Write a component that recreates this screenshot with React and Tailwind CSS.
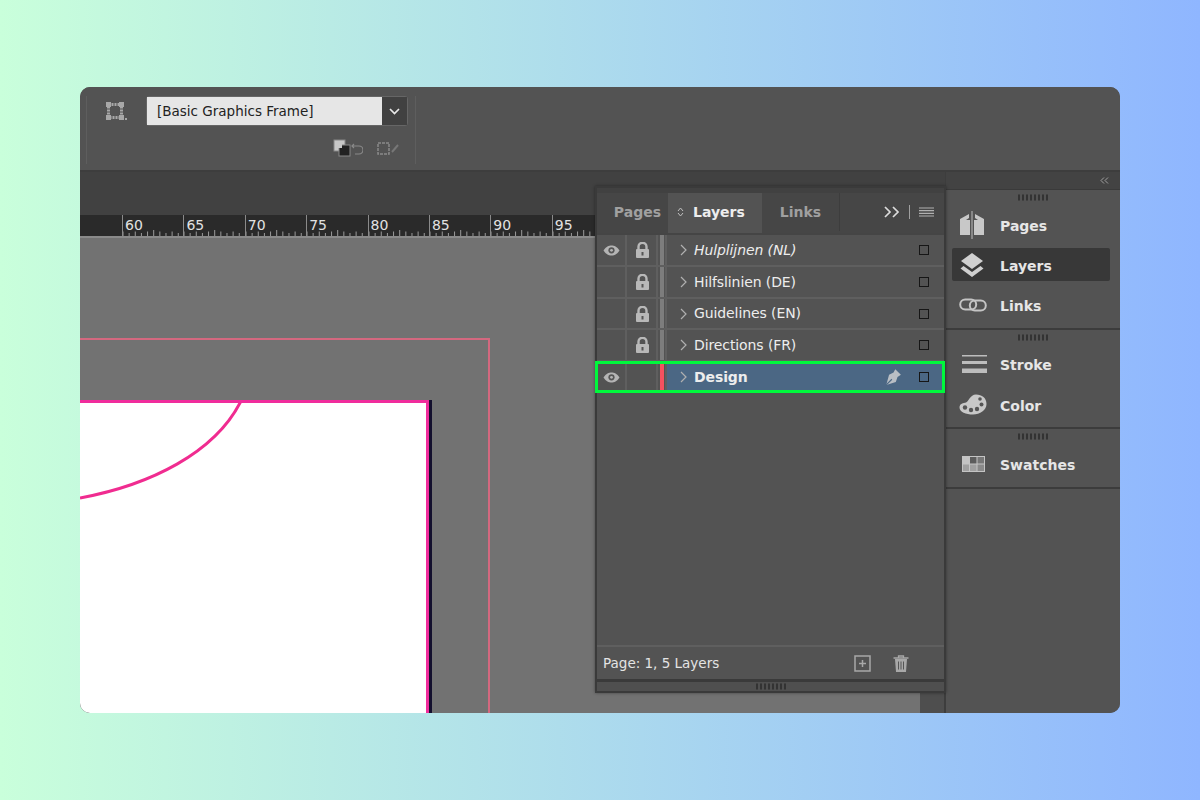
const font = { fontFamily: '"DejaVu Sans", sans-serif' };

const layers = [
  { label: 'Hulplijnen (NL)', eye: true, lock: true, italic: true, height: 'h-[32px]' },
  { label: 'Hilfslinien (DE)', lock: true, height: 'h-[32px]' },
  { label: 'Guidelines (EN)', lock: true, height: 'h-[31px]' },
  { label: 'Directions (FR)', lock: true, height: 'h-[32px]' },
  { label: 'Design', eye: true, active: true, height: 'h-[30px]' },
];

const rulerLabels = [60, 65, 70, 75, 80, 85, 90, 95];

function Eye() {
  return (
    <svg width="17" height="11" viewBox="0 0 17 11">
      <path d="M0.5 5.5C3 1.5 5.8 0.5 8.5 0.5s5.5 1 8 5c-2.5 4-5.3 5-8 5s-5.5-1-8-5z" fill="#b4b4b4" />
      <circle cx="8.5" cy="5.3" r="3.1" fill="#555" />
      <circle cx="8.5" cy="5.3" r="1.4" fill="#b4b4b4" />
    </svg>
  );
}

function Lock() {
  return (
    <svg width="15" height="16" viewBox="0 0 15 16">
      <path d="M3.5 7V4.8a4 4 0 0 1 8 0V7" fill="none" stroke="#b8b8b8" strokeWidth="2.4" />
      <rect x="1" y="7" width="13" height="9" rx="1" fill="#b8b8b8" />
      <rect x="6.5" y="10" width="2" height="3.5" fill="#555" />
    </svg>
  );
}

function Chevron({ color = '#b0b0b0' }) {
  return (
    <svg width="7" height="12" viewBox="0 0 7 12">
      <path d="M1 1l5 5-5 5" fill="none" stroke={color} strokeWidth="1.2" />
    </svg>
  );
}

function Grip() {
  return (
    <svg width="30" height="7" viewBox="0 0 30 7" className="block">
      {[1, 5, 9, 13, 17, 21, 25, 29].map((x) => (
        <line key={x} x1={x} x2={x} y1="0.5" y2="6.5" stroke="#333" strokeWidth="2" />
      ))}
    </svg>
  );
}

function RulerTicks() {
  const ticks = [];
  for (let i = 0; i < 10; i++) {
    ticks.push(
      <line key={i} x1={i * 6.14} x2={i * 6.14} y1={i === 5 ? 0 : i % 2 ? 3 : 1.5} y2="6" stroke="#9a9a9a" strokeWidth="1" />
    );
  }
  return (
    <svg width="61" height="6" viewBox="0 0 61 6" className="absolute bottom-0 left-0">
      {ticks}
    </svg>
  );
}

function LayerRow({ layer }) {
  return (
    <div className={`relative flex items-stretch ${layer.height} ${layer.active ? '' : 'border-b-2 border-[#5f5f5f]'}`}>
      <div className="flex w-[30px] items-center justify-center border-r-2 border-[#5f5f5f]">
        {layer.eye && <Eye />}
      </div>
      <div className="flex w-[31px] items-center justify-center border-r-2 border-[#5f5f5f] pl-[2px]">
        {layer.lock && <Lock />}
      </div>
      <div className="flex w-[9px] justify-center border-r-2 border-[#5f5f5f]">
        <div className={`w-[4px] ${layer.active ? 'bg-[#f5515f]' : 'bg-[#7d7d7d]'}`} />
      </div>
      <div className={`flex flex-1 items-center pl-[13px] pr-[15px] ${layer.active ? 'bg-[#4b6784]' : ''}`}>
        <Chevron />
        <span className={`ml-[7px] text-[14px] tracking-[-0.1px] text-[#ededed] ${layer.italic ? 'italic' : ''} ${layer.active ? 'font-bold' : ''}`}>
          {layer.label}
        </span>
        {layer.active && (
          <svg width="18" height="18" viewBox="0 0 16 16" className="ml-auto mr-[17px]">
            <path d="M10 1l5 5-3 2-1.5 4.500L2 15 4.500 6 8.500 4z" fill="#b9bec4" />
            <path d="M2 15l5-5" stroke="#4b6784" strokeWidth="1" />
          </svg>
        )}
        <div className={`h-[10px] w-[10px] border-[1.5px] border-[#161616] ${layer.active ? 'ml-0' : 'ml-auto'}`} />
      </div>
      {layer.active && (
        <div className="pointer-events-none absolute -left-[2px] -right-[1px] top-[-1px] bottom-[-1px] border-[3px] border-[#00f83c]" />
      )}
    </div>
  );
}

function LayersPanel() {
  return (
    <div className="absolute left-[515px] top-[14px] flex h-[507px] w-[351px] flex-col border-[2px] border-[#3a3a3a] bg-[#535353] shadow-[0_0_3px_rgba(0,0,0,0.4)]">
      <div className="h-[5px] bg-[#414141]" />
      <div className="flex h-[42px] items-stretch border-b-2 border-[#454545] bg-[#464646] pb-[2px] text-[14px] font-bold">
        <div className="flex w-[71px] items-center justify-end pr-[7px] text-[#a0a0a0]">Pages</div>
        <div className="-mb-[2px] flex w-[94px] items-center gap-[9px] bg-[#535353] pb-[2px] pl-[9px] text-[#ededed]">
          <svg width="7" height="10" viewBox="0 0 7 10">
            <path d="M1 4l2.500-3L6 4M1 6l2.500 3L6 6" fill="none" stroke="#c0c0c0" strokeWidth="1" />
          </svg>
          Layers
        </div>
        <div className="flex w-[78px] items-center justify-center border-r border-[#3d3d3d] text-[#a0a0a0]">Links</div>
        <div className="flex flex-1 items-center justify-end gap-[9px] pr-[10px]">
          <svg width="16" height="12" viewBox="0 0 16 12">
            <path d="M1 1l5 5-5 5M9 1l5 5-5 5" fill="none" stroke="#dcdcdc" strokeWidth="1.700" />
          </svg>
          <div className="h-[14px] w-px bg-[#a0a0a0]" />
          <svg width="15" height="10" viewBox="0 0 15 10">
            <path d="M0 1h15M0 3.700h15M0 6.300h15M0 9h15" stroke="#b0b0b0" strokeWidth="1.200" />
          </svg>
        </div>
      </div>
      <div className="flex flex-1 flex-col border-b-2 border-[#5f5f5f]">
        {layers.map((layer) => (
          <LayerRow key={layer.label} layer={layer} />
        ))}
      </div>
      <div className="flex h-[35px] items-center border-b-[3px] border-[#3a3a3a] pl-[6px] text-[13.500px] text-[#e4e4e4]">
        <span>Page: 1, 5 Layers</span>
        <svg width="17" height="17" viewBox="0 0 17 17" className="ml-[135px]">
          <rect x="1" y="1" width="15" height="15" fill="none" stroke="#a8a8a8" strokeWidth="1.500" />
          <path d="M8.500 5v7M5 8.500h7" stroke="#a8a8a8" strokeWidth="1.500" />
        </svg>
        <svg width="16" height="17" viewBox="0 0 16 17" className="ml-[22px]">
          <path d="M0.500 3h15M5.500 3V1h5v2" fill="none" stroke="#a8a8a8" strokeWidth="1.300" />
          <path d="M2 4h12l-1 13H3z" fill="#a8a8a8" />
          <path d="M5.500 6.500v8M8 6.500v8M10.500 6.500v8" stroke="#555" strokeWidth="1" />
        </svg>
      </div>
      <div className="flex h-[9px] items-center justify-center bg-[#4f4f4f]">
        <Grip />
      </div>
    </div>
  );
}

function DockRow({ icon, label, active }) {
  return (
    <div className={`ml-[6px] mr-[10px] flex h-[33px] items-center rounded-[2px] pl-[7px] ${active ? 'bg-[#383838]' : ''}`}>
      <div className="flex w-[41px] items-center">{icon}</div>
      <span className="mt-[3px] text-[14px] font-bold text-[#e6e6e6]">{label}</span>
    </div>
  );
}

function DockGroup({ children, className }) {
  return (
    <div className={`flex flex-col border-b-2 border-[#3c3c3c] pt-[4px] ${className}`}>
      <div className="flex justify-center">
        <Grip />
      </div>
      {children}
    </div>
  );
}

const icons = {
  pages: (
    <svg width="26" height="28" viewBox="0 0 26 28">
      <path d="M1 8l9-5v4l-3 2h4v15H1zM25 8l-9-5v4l3 2h-4v15h10z" fill="#c8c8c8" />
      <path d="M13 0v28" stroke="#9a9a9a" strokeWidth="1.500" />
    </svg>
  ),
  layers: (
    <svg width="26" height="26" viewBox="0 0 26 26">
      <path d="M13 1l11 8-11 8-11-8z" fill="#d0d0d0" />
      <path d="M4.500 14L1.500 16.500 13 25l11.500-8.500-3-2.500L13 20z" fill="#d0d0d0" />
    </svg>
  ),
  links: (
    <svg width="28" height="14" viewBox="0 0 28 14">
      <rect x="1.200" y="1.500" width="16" height="10" rx="5" fill="none" stroke="#c4c4c4" strokeWidth="2" />
      <rect x="10.800" y="2.500" width="16" height="10" rx="5" fill="none" stroke="#c4c4c4" strokeWidth="2" />
    </svg>
  ),
  stroke: (
    <svg width="25" height="18" viewBox="0 0 25 18" className="ml-[3px]">
      <rect y="0" width="25" height="1.500" fill="#bdbdbd" />
      <rect y="6" width="25" height="3" fill="#bdbdbd" />
      <rect y="13.500" width="25" height="4.500" fill="#bdbdbd" />
    </svg>
  ),
  color: (
    <svg width="28" height="21" viewBox="0 0 28 21">
      <path d="M17 0.500c6 0 10.500 3.500 10.500 9.500S21 20.500 14 20.500 0.500 18 0.500 13.500c0-4 4-4.500 6.500-5S11 0.500 17 0.500z" fill="#c8c8c8" />
      <circle cx="6" cy="13.500" r="2.200" fill="#555" />
      <circle cx="12" cy="16" r="2.200" fill="#555" />
      <circle cx="18" cy="15" r="2.200" fill="#555" />
      <circle cx="22.500" cy="10.500" r="2" fill="#555" />
      <circle cx="21" cy="5" r="1.800" fill="#555" />
    </svg>
  ),
  swatches: (
    <svg width="23" height="16" viewBox="0 0 23 16" className="ml-[3px]">
      <rect width="23" height="16" fill="#c4c4c4" />
      <rect x="8" y="1" width="6.500" height="6.500" fill="#5c5c5c" />
      <rect x="15.500" y="1" width="6.500" height="6.500" fill="#777" />
      <rect x="1" y="8.500" width="6" height="6.500" fill="#a0a0a0" />
      <rect x="8" y="8.500" width="6.500" height="6.500" fill="#a0a0a0" />
      <rect x="15.500" y="8.500" width="6.500" height="6.500" fill="#8a8a8a" />
    </svg>
  ),
};

export default function App() {
  return (
    <div
      className="flex h-[800px] w-[1200px] items-center justify-center bg-[linear-gradient(90deg,#c9ffdb_0%,#8fb6ff_100%)]"
      style={font}
    >
      <div className="flex h-[626px] w-[1040px] flex-col overflow-hidden rounded-[10px] bg-[#535353]">
        {/* control bar */}
        <div className="flex h-[85px] shrink-0 border-b-2 border-[#3d3d3d] bg-[#535353] pl-[6px] pt-[9px]">
          <div className="flex h-[68px] w-[330px] border-x border-[#5e5e5e]">
            <div className="flex w-[59px] justify-center pt-[6px]">
              <svg width="21" height="18" viewBox="0 0 21 18">
                <rect x="2.500" y="2.500" width="13" height="13" fill="none" stroke="#a8a8a8" strokeWidth="3" strokeDasharray="2 1" />
                <rect x="0" y="0" width="5" height="5" fill="#a8a8a8" />
                <rect x="13" y="0" width="5" height="5" fill="#a8a8a8" />
                <rect x="0" y="13" width="5" height="5" fill="#a8a8a8" />
                <rect x="13" y="13" width="5" height="5" fill="#a8a8a8" />
                <rect x="19" y="16" width="2" height="2" fill="#a8a8a8" />
              </svg>
            </div>
            <div className="flex flex-col">
              <div className="flex h-[30px] w-[262px] items-stretch rounded-[3px] border border-[#666]">
                <div className="flex w-[235px] items-center bg-[#e6e6e6] pl-[10px] text-[13.500px] text-[#222]">
                  [Basic Graphics Frame]
                </div>
                <div className="flex flex-1 items-center justify-center bg-[#414141]">
                  <svg width="11" height="7" viewBox="0 0 11 7">
                    <path d="M1 1l4.500 4.500L10 1" fill="none" stroke="#e8e8e8" strokeWidth="1.700" />
                  </svg>
                </div>
              </div>
              <div className="mt-[13px] flex items-center justify-end gap-[14px] pr-[7px]">
                <svg width="30" height="18" viewBox="0 0 30 18">
                  <rect x="1" y="1" width="11" height="11" fill="#c8c8c8" stroke="#888" />
                  <rect x="6" y="6" width="11" height="11" fill="#222" stroke="#888" />
                  <rect x="3" y="3" width="6" height="6" fill="#c8c8c8" />
                  <path d="M19 7h7a3 3 0 0 1 0 8h-4M21 5l-2 2 2 2" fill="none" stroke="#8a8a8a" strokeWidth="1.200" />
                </svg>
                <svg width="24" height="15" viewBox="0 0 24 15">
                  <rect x="1" y="2" width="11" height="11" fill="none" stroke="#8a8a8a" strokeWidth="1.500" strokeDasharray="3 1" />
                  <path d="M15 11l6-7" stroke="#777" strokeWidth="2" />
                </svg>
              </div>
            </div>
          </div>
        </div>

        <div className="relative flex min-h-0 flex-1">
          {/* document area */}
          <div className="relative flex w-[865px] flex-col">
            <div className="h-[43px] shrink-0 bg-[#414141]" />
            <div className="flex h-[23px] shrink-0 overflow-hidden border-b-2 border-[#8a8a8a] bg-[#2a2a2a] pl-[42px]">
              {rulerLabels.map((n) => (
                <div key={n} className="relative w-[61.400px] shrink-0 border-l border-[#8a8a8a] pl-[2px] text-[14px] leading-[20px] text-[#e2e2e2]">
                  {n}
                  <RulerTicks />
                </div>
              ))}
            </div>
            <div className="flex min-h-0 flex-1">
              <div className="relative flex-1 overflow-hidden bg-[#727272]">
                <div className="absolute left-[-2px] top-[100px] h-[400px] w-[412px] border-r-2 border-t-2 border-[#d4687f]" />
                <div className="absolute left-0 top-[162px] h-[320px] w-[352px] border-r-[3px] border-[#14102e]">
                  <div className="relative h-full w-full overflow-hidden border-r-[3px] border-t-[3px] border-[#f02c9c] bg-white">
                    <svg width="170" height="100" viewBox="0 0 170 100" className="absolute left-0 top-0">
                      <path d="M161 -2C135 50 70 82 0 95" fill="none" stroke="#f02c90" strokeWidth="3" />
                    </svg>
                  </div>
                </div>
              </div>
              <div className="w-[25px] shrink-0 border-r border-[#3d3d3d] bg-[#4e4e4e]" />
            </div>
            <LayersPanel />
          </div>

          {/* right dock */}
          <div className="flex flex-1 flex-col border-l border-[#3d3d3d] bg-[#535353]">
            <div className="flex h-[18px] shrink-0 items-center justify-end border-b border-[#3a3a3a] bg-[#434343] pr-[11px]">
              <svg width="9" height="7" viewBox="0 0 9 7">
                <path d="M4 0.500l-3 3 3 3M8 0.500l-3 3 3 3" fill="none" stroke="#a0a0a0" strokeWidth="1" />
              </svg>
            </div>
            <DockGroup className="h-[140px]">
              <div className="mt-[7px] flex flex-col gap-[7px]">
                <DockRow icon={icons.pages} label="Pages" />
                <DockRow icon={icons.layers} label="Layers" active />
                <DockRow icon={icons.links} label="Links" />
              </div>
            </DockGroup>
            <DockGroup className="h-[99px]">
              <div className="mt-[6px] flex flex-col gap-[8px]">
                <DockRow icon={icons.stroke} label="Stroke" />
                <DockRow icon={icons.color} label="Color" />
              </div>
            </DockGroup>
            <DockGroup className="h-[60px]">
              <div className="mt-[7px]">
                <DockRow icon={icons.swatches} label="Swatches" />
              </div>
            </DockGroup>
          </div>
        </div>
      </div>
    </div>
  );
}
